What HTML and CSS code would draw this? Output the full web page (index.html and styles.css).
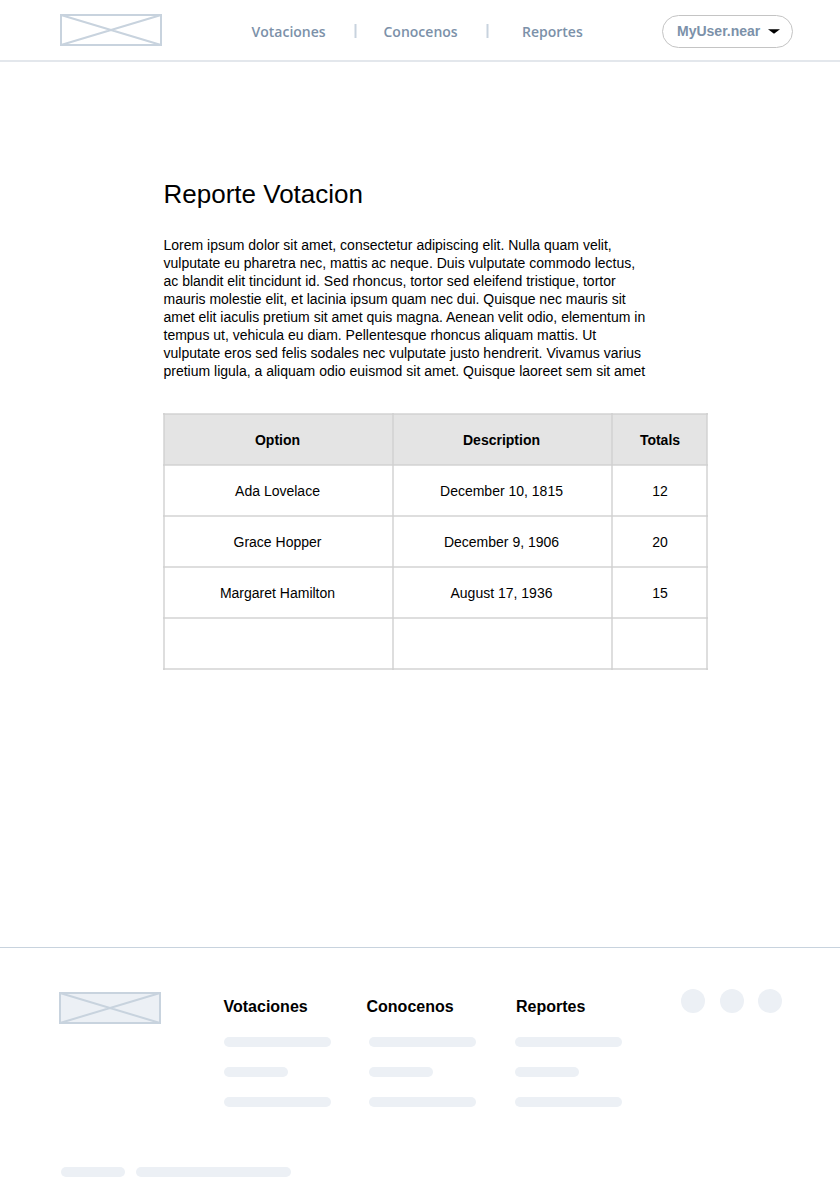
FILE: index.html
```html
<!DOCTYPE html>
<html lang="es">
<head>
<meta charset="utf-8">
<title>Reporte Votacion</title>
<link rel="stylesheet" href="styles.css">
</head>
<body>
<header class="topbar">
  <svg class="logo" width="102" height="32" viewBox="0 0 102 32"><path d="M1 1L101 31M101 1L1 31"/><rect x="1" y="1" width="100" height="30"/></svg>
  <nav class="nav">
    <a class="nav-votaciones">Votaciones</a>
    <svg class="divider" width="3" height="14"><path d="M1.5 0V14"/></svg>
    <a class="nav-conocenos">Conocenos</a>
    <svg class="divider" width="3" height="14"><path d="M1.5 0V14"/></svg>
    <a class="nav-reportes">Reportes</a>
  </nav>
  <button class="user">MyUser.near<svg width="12" height="5" viewBox="0 0 12 5"><path d="M0 .3H12L6 4.7Z"/></svg></button>
</header>
<main class="content">
  <h1 class="title">Reporte Votacion</h1>
  <p class="intro">Lorem ipsum dolor sit amet, consectetur adipiscing elit. Nulla quam velit,<br>vulputate eu pharetra nec, mattis ac neque. Duis vulputate commodo lectus,<br>ac blandit elit tincidunt id. Sed rhoncus, tortor sed eleifend tristique, tortor<br>mauris molestie elit, et lacinia ipsum quam nec dui. Quisque nec mauris sit<br>amet elit iaculis pretium sit amet quis magna. Aenean velit odio, elementum in<br>tempus ut, vehicula eu diam. Pellentesque rhoncus aliquam mattis. Ut<br>vulputate eros sed felis sodales nec vulputate justo hendrerit. Vivamus varius<br>pretium ligula, a aliquam odio euismod sit amet. Quisque laoreet sem sit amet</p>
  <table class="report">
    <colgroup><col class="col-option"><col class="col-description"><col class="col-totals"></colgroup>
    <thead><tr><th>Option</th><th>Description</th><th>Totals</th></tr></thead>
    <tbody>
      <tr><td>Ada Lovelace</td><td>December 10, 1815</td><td>12</td></tr>
      <tr><td>Grace Hopper</td><td>December 9, 1906</td><td>20</td></tr>
      <tr><td>Margaret Hamilton</td><td>August 17, 1936</td><td>15</td></tr>
      <tr><td></td><td></td><td></td></tr>
    </tbody>
  </table>
</main>
<footer class="footer">
  <div class="footer-main">
    <svg class="logo logo-filled" width="102" height="32" viewBox="0 0 102 32"><rect x="1" y="1" width="100" height="30"/><path d="M1 1L101 31M101 1L1 31"/></svg>
    <section class="links links-votaciones"><h2>Votaciones</h2><div class="bars"><i class="bar"></i><i class="bar short"></i><i class="bar"></i></div></section>
    <section class="links links-conocenos"><h2>Conocenos</h2><div class="bars"><i class="bar"></i><i class="bar short"></i><i class="bar"></i></div></section>
    <section class="links links-reportes"><h2>Reportes</h2><div class="bars"><i class="bar"></i><i class="bar short"></i><i class="bar"></i></div></section>
    <div class="social"><i class="dot"></i><i class="dot"></i><i class="dot"></i></div>
  </div>
  <div class="legal"><i class="bar short"></i><i class="bar long"></i></div>
</footer>
</body>
</html>
```

FILE: styles.css
```css
* { box-sizing: border-box; }
body { margin: 0; height: 1190px; display: flex; flex-direction: column; background: #fff; color: #000; font: 14px/18px "Liberation Sans", Arial, sans-serif; }
h1, h2, p { margin: 0; }
.topbar { height: 62px; flex: none; display: flex; align-items: flex-start; padding-left: 60px; border-bottom: 2px solid #e3e7ec; }
.logo { display: block; flex: none; margin-top: 14px; fill: none; stroke: #c8d3de; stroke-width: 2; }
.logo-filled { margin-top: 44px; }
.logo-filled rect { fill: #ecf0f5; }
.nav { display: flex; flex: none; align-items: flex-start; width: 500px; padding: 22px 0 0 89.5px; color: #7c91a9; font: 600 14px/20px "Open Sans", sans-serif; }
.nav-votaciones { width: 102.5px; }
.nav-conocenos { width: 102.5px; margin-left: 26.5px; }
.nav-reportes { margin-left: 33px; }
.divider { display: block; flex: none; margin-top: 2px; stroke: #c8d3de; stroke-width: 2; }
.user { display: flex; align-items: center; gap: 8px; width: 131px; height: 33px; margin-top: 15px; padding: 0 0 1px 14px; border: 1px solid #c4c4c4; border-radius: 17px; background: #fff; color: #7c91a9; font: bold 14px/16px "Liberation Sans", Arial, sans-serif; }
.content { height: 885px; flex: none; padding: 116px 0 0 163.5px; }
.title { font-size: 26px; line-height: 32px; font-weight: 400; }
.intro { margin-top: 26px; white-space: nowrap; }
.report { width: 545px; margin: 33px 0 0 -.5px; border-collapse: collapse; table-layout: fixed; }
.col-option { width: 229px; }
.col-description { width: 219px; }
.col-totals { width: 95px; }
.report th, .report td { height: 51px; padding: 0 2px 0 0; border: 2px solid rgba(208, 208, 208, .7); text-align: center; vertical-align: middle; }
.report th { background: #e4e4e4; }
.report th:last-child, .report td:last-child { padding: 0 0 0 1px; }
.footer { height: 243px; flex: none; border-top: 1px solid #c8d3de; }
.footer-main { display: flex; align-items: flex-start; height: 218px; padding-left: 59px; }
.links { padding-top: 49px; }
.links h2 { font-size: 16px; line-height: 20px; }
.links-votaciones { width: 143px; margin-left: 62.5px; }
.links-conocenos { width: 149px; }
.links-reportes { width: 165px; }
.bars { display: flex; flex-direction: column; gap: 20px; margin-top: 20px; }
.links-conocenos .bars { padding-left: 2.5px; }
.links-reportes .bars { margin-left: -1px; }
.links-reportes h2 { padding-left: .5px; }
.bar { display: block; width: 107px; height: 10px; border-radius: 5px; background: #ecf0f5; }
.bar.short { width: 64px; }
.bar.long { width: 155px; }
.social { display: flex; padding: 40.5px 0 0; }
.dot { width: 24px; height: 24px; border-radius: 50%; background: #ecf0f5; }
.dot + .dot { margin-left: 15px; }
.dot + .dot + .dot { margin-left: 14px; }
.legal { display: flex; gap: 11px; padding: .5px 0 0 61.4px; }
```
